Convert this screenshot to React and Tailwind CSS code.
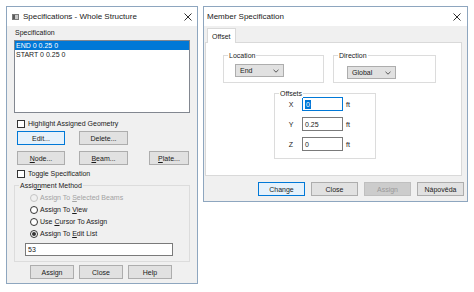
import React from 'react'

function CloseX() {
  return (
    <svg width="8" height="8" viewBox="0 0 8 8" className="block">
      <path d="M0.5 0.5L7.5 7.5M7.5 0.5L0.5 7.5" stroke="#1a1a1a" strokeWidth="0.9" />
    </svg>
  )
}

function AppIcon() {
  return (
    <svg width="7" height="6" viewBox="0 0 7 6" className="block">
      <rect x="0" y="0" width="7" height="6" fill="#c8c8c8" />
      <rect x="0" y="0" width="3" height="6" fill="#5a5a5a" />
      <rect x="0.5" y="0.5" width="6" height="5" fill="none" stroke="#7a7a7a" strokeWidth="1" />
    </svg>
  )
}

function Chevron() {
  return (
    <svg width="6" height="4" viewBox="0 0 6 4" className="block">
      <path d="M0.5 0.8L3 3.2L5.5 0.8" fill="none" stroke="#333" strokeWidth="0.8" />
    </svg>
  )
}

function Checkbox({ label }) {
  return (
    <div className="flex items-center h-[9px] ml-[3px]">
      <div className="w-[8px] h-[8px] border border-[#333] bg-white" />
      <span className="ml-[3px] leading-[9px]">{label}</span>
    </div>
  )
}

function Radio({ children, checked, disabled }) {
  return (
    <div className="flex items-center h-[9px] ml-[15px]">
      <div
        className={`w-[8px] h-[8px] rounded-full border flex items-center justify-center ${
          disabled ? 'border-[#c4c4c4] bg-[#f0f0f0]' : 'border-[#333] bg-white'
        }`}
      >
        {checked && <div className="w-[4px] h-[4px] rounded-full bg-[#333]" />}
      </div>
      <span className={`ml-[2px] leading-[9px] ${disabled ? 'text-[#a3a3a3]' : ''}`}>{children}</span>
    </div>
  )
}

function Btn({ children, className = '', focused, disabled }) {
  return (
    <div
      className={`h-[14px] border flex items-center justify-center leading-[9px] ${
        focused
          ? 'border-[#0078d7] bg-[#e5f1fb]'
          : disabled
          ? 'border-[#bfbfbf] bg-[#cccccc] text-[#9a9a9a]'
          : 'border-[#adadad] bg-[#e1e1e1]'
      } ${className}`}
    >
      {children}
    </div>
  )
}

function Group({ label, className = '', bg = 'bg-white', children }) {
  return (
    <div className={`relative border border-[#dcdcdc] ${className}`}>
      <span className={`absolute -top-[5px] left-[4px] px-[1px] leading-[9px] ${bg}`}>{label}</span>
      {children}
    </div>
  )
}

function Dropdown({ value, className = '' }) {
  return (
    <div className={`h-[13px] border border-[#adadad] bg-[#e1e1e1] flex items-center pl-[4px] pr-[4px] ${className}`}>
      <span className="leading-[9px]">{value}</span>
      <span className="ml-auto">
        <Chevron />
      </span>
    </div>
  )
}

function OffsetRow({ axis, value, focused }) {
  return (
    <div className="flex items-center h-[14px]">
      <span className="w-[6px] ml-[13px] text-center leading-[9px]">{axis}</span>
      <div
        className={`ml-[8px] w-[41px] h-[14px] border bg-white flex items-center pl-[2px] ${
          focused ? 'border-[#0078d7]' : 'border-[#7a7a7a]'
        }`}
      >
        {focused ? (
          <span className="bg-[#0078d7] text-white leading-[9px] px-[1px]">{value}</span>
        ) : (
          <span className="leading-[9px]">{value}</span>
        )}
      </div>
      <span className="ml-[3px] leading-[9px]">ft</span>
    </div>
  )
}

export default function App() {
  return (
    <div className="w-[474px] h-[292px] bg-white flex items-start gap-[5px] pl-[6px] pt-[6px] font-['Liberation_Sans',Arial,sans-serif] text-[7px] text-[#1a1a1a]">
      {/* Specifications - Whole Structure */}
      <div className="w-[192px] h-[278px] border border-[#8ea6bf] bg-[#f0f0f0] flex flex-col">
        <div className="h-[19px] bg-white flex items-center pl-[5px] pr-[5px]">
          <AppIcon />
          <span className="ml-[4px] text-[8px] leading-[10px]">Specifications - Whole Structure</span>
          <span className="ml-auto">
            <CloseX />
          </span>
        </div>

        <div className="flex-1 flex flex-col pl-[7px]">
          <span className="mt-[3px] ml-[1px] leading-[8px]">Specification</span>

          <div className="mt-[3px] w-[176px] h-[73px] border border-[#828790] bg-white">
            <div className="h-[9px] bg-[#0078d7] text-white leading-[9px] pl-[1px]">END 0 0.25 0</div>
            <div className="h-[9px] leading-[9px] pl-[1px]">START 0 0.25 0</div>
          </div>

          <div className="mt-[6px]">
            <Checkbox label="Highlight Assigned Geometry" />
          </div>

          <div className="mt-[3px] flex">
            <Btn focused className="ml-[3px] w-[48px]">Edit...</Btn>
            <Btn className="ml-[14px] w-[49px]">Delete...</Btn>
          </div>

          <div className="mt-[6px] flex">
            <Btn className="ml-[3px] w-[48px]">
              <span><u>N</u>ode...</span>
            </Btn>
            <Btn className="ml-[14px] w-[49px]">
              <span><u>B</u>eam...</span>
            </Btn>
            <Btn className="ml-[21px] w-[40px]">
              <span><u>P</u>late...</span>
            </Btn>
          </div>

          <div className="mt-[4px]">
            <Checkbox label="Toggle Specification" />
          </div>

          <Group label={<span>Assig<u>n</u>ment Method</span>} bg="bg-[#f0f0f0]" className="mt-[7px] w-[176px] h-[77px] flex flex-col">
            <div className="mt-[7px] flex flex-col gap-[3px]">
              <Radio disabled>Assign To <u>S</u>elected Beams</Radio>
              <Radio>Assign To <u>V</u>iew</Radio>
              <Radio>Use <u>C</u>ursor To Assign</Radio>
              <Radio checked>Assign To <u>E</u>dit List</Radio>
            </div>
            <div className="mt-[5px] ml-[10px] w-[148px] h-[13px] border border-[#7a7a7a] bg-white flex items-center pl-[2px]">
              <span className="leading-[9px]">53</span>
            </div>
          </Group>

          <div className="mt-[3px] flex">
            <Btn className="ml-[16px] w-[44px]">Assign</Btn>
            <Btn className="ml-[5px] w-[44px]">Close</Btn>
            <Btn className="ml-[5px] w-[44px]">Help</Btn>
          </div>
        </div>
      </div>

      {/* Member Specification */}
      <div className="w-[265px] h-[196px] border border-[#8ea6bf] bg-[#f0f0f0] flex flex-col">
        <div className="h-[19px] bg-white flex items-center pl-[3px] pr-[6px]">
          <span className="text-[8px] leading-[10px]">Member Specification</span>
          <span className="ml-auto">
            <CloseX />
          </span>
        </div>

        <div className="flex-1 flex flex-col pl-[1px]">
          <div className="mt-[2px] ml-[2px] w-[29px] h-[15px] -mb-[1px] relative z-10 border border-b-0 border-[#d9d9d9] bg-white pl-[4px] pt-[3px] leading-[9px]">
            Offset
          </div>
          <div className="w-[257px] h-[134px] border border-[#d9d9d9] bg-white flex flex-col">
            <div className="mt-[12px] ml-[17px] flex">
              <Group label="Location" className="w-[101px] h-[28px]">
                <Dropdown value="End" className="mt-[8px] ml-[11px] w-[49px]" />
              </Group>
              <Group label="Direction" className="ml-[9px] w-[103px] h-[28px]">
                <Dropdown value="Global" className="mt-[10px] ml-[13px] w-[49px]" />
              </Group>
            </div>

            <Group label="Offsets" className="mt-[10px] ml-[68px] w-[102px] h-[66px]">
              <div className="mt-[3px] flex flex-col gap-[6px]">
                <OffsetRow axis="X" value="0" focused />
                <OffsetRow axis="Y" value="0.25" />
                <OffsetRow axis="Z" value="0" />
              </div>
            </Group>
          </div>

          <div className="mt-[6px] flex justify-end gap-[6px] pr-[3px]">
            <Btn focused className="w-[47px]">Change</Btn>
            <Btn className="w-[47px]">Close</Btn>
            <Btn disabled className="w-[47px]">Assign</Btn>
            <Btn className="w-[47px]">Nápověda</Btn>
          </div>
        </div>
      </div>
    </div>
  )
}
